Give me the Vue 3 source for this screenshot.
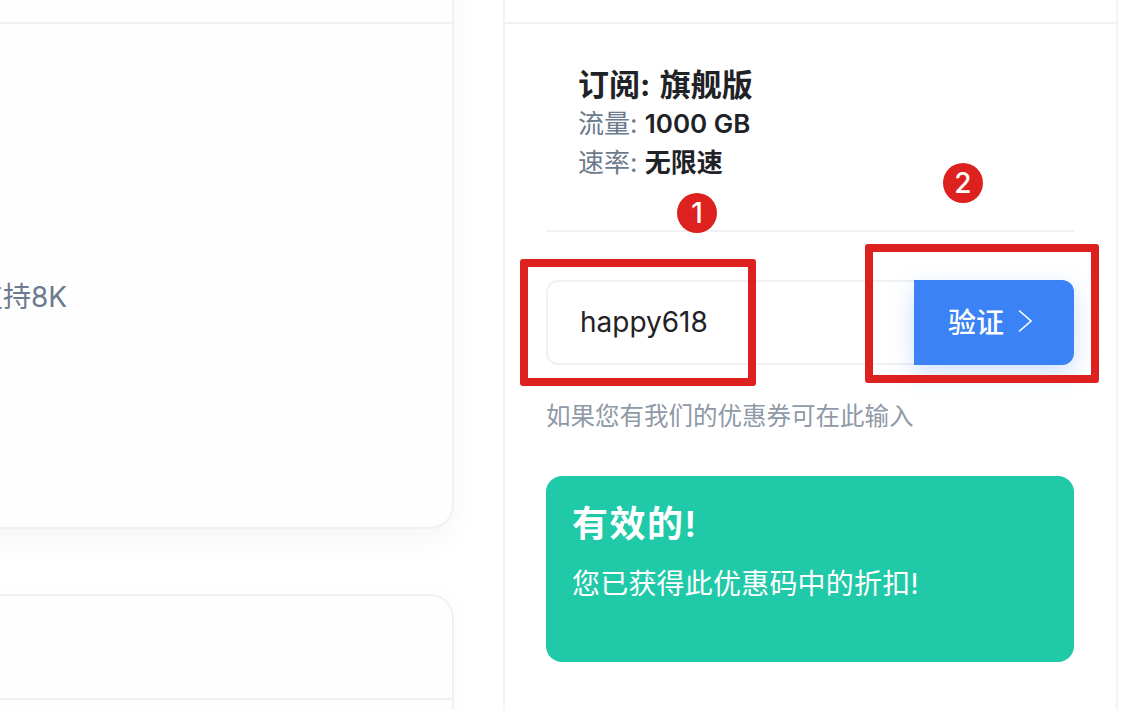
<script setup>
const plan = [
  { label: '流量:', value: '1000 GB' },
  { label: '速率:', value: '无限速' },
]
</script>

<template>
  <div class="page">
    <div class="left">
      <section class="card first">
        <div class="card-head first-head"></div>
        <div class="first-body"><p class="feature">支持8K</p></div>
      </section>
      <section class="card second">
        <div class="card-head second-head"></div>
        <div class="second-body"></div>
      </section>
    </div>
    <section class="right">
      <div class="right-head"></div>
      <div class="right-body">
        <div class="summary">
          <h3>订阅: 旗舰版</h3>
          <p v-for="row in plan" :key="row.label" class="row">
            <span class="label">{{ row.label }}</span> <b>{{ row.value }}</b>
          </p>
        </div>
        <div class="coupon">
          <input class="code" value="happy618" readonly />
          <button class="verify">
            验证
            <svg width="16" height="24" viewBox="0 0 16 24" fill="none" stroke="#fff" stroke-width="1.6">
              <path d="M2 1.5 14 12 2 22.5" />
            </svg>
          </button>
        </div>
        <p class="hint">如果您有我们的优惠券可在此输入</p>
        <div class="success">
          <h4>有效的!</h4>
          <p>您已获得此优惠码中的折扣!</p>
        </div>
      </div>
    </section>

    <div class="mark box-one"></div>
    <div class="mark box-two"></div>
    <span class="badge badge-one">1</span>
    <span class="badge badge-two">2</span>
  </div>
</template>

<style>
body { background: #fff; }
</style>

<style scoped>
.page {
  position: relative;
  width: 1128px;
  height: 710px;
  overflow: hidden;
  display: flex;
  gap: 49px;
  background: #fff;
  color: #1f2226;
  font-family: Inter, "Noto Sans CJK SC", sans-serif;
}
.left {
  flex: none;
  width: 654px;
  margin-left: -200px;
  margin-top: -60px;
  display: flex;
  flex-direction: column;
  gap: 65px;
}
.card {
  flex: none;
  background: #fefefe;
  border: 2px solid #f0f0f5;
  border-radius: 24px;
  box-shadow: 0 10px 24px rgba(90, 110, 110, 0.06);
}
.card-head { border-bottom: 2px solid #f0f0f5; }
.first-head { height: 80px; }
.first-body { height: 503px; box-sizing: border-box; padding: 254px 0 0 173px; }
.feature {
  margin: 0;
  font-size: 28px;
  line-height: 38px;
  color: #6b7a8d;
}
.second { box-shadow: 0 0 20px rgba(90, 90, 120, 0.03); }
.second-head { height: 102px; }
.second-body { height: 80px; }

.right {
  flex: none;
  width: 615px;
  height: 760px;
  box-sizing: border-box;
  border-left: 2px solid #f2f2f7;
  border-right: 2px solid #f2f2f7;
}
.right-head { height: 22px; border-bottom: 2px solid #f0f0f5; }
.right-body { padding: 42px 42px 0 41px; }
.summary {
  padding: 0 0 48px 32px;
  border-bottom: 2px solid #f0f0f5;
}
.summary h3 {
  margin: 0;
  font-size: 31px;
  line-height: 38px;
  font-weight: 700;
  word-spacing: 2px;
}
.row {
  margin: 0;
  font-size: 26px;
  line-height: 39px;
}
.row b { font-weight: 600; }
.label { color: #6b7a8d; }
.coupon {
  display: flex;
  margin-top: 48px;
  height: 85px;
}
.code {
  flex: 1;
  min-width: 0;
  box-sizing: border-box;
  padding: 0 32px 2px;
  border: 2px solid #f0f0f5;
  border-right: 0;
  border-radius: 12px 0 0 12px;
  outline: 0;
  background: #fff;
  color: #1f2226;
  font: 400 28px Inter, "Noto Sans CJK SC", sans-serif;
}
.verify {
  flex: none;
  width: 160px;
  display: flex;
  align-items: center;
  justify-content: center;
  gap: 13px;
  border: 0;
  padding: 0 7px 3px 0;
  border-radius: 0 12px 12px 0;
  background: #3b82f6;
  color: #fff;
  font: 500 28px Inter, "Noto Sans CJK SC", sans-serif;
  box-shadow: 0 8px 24px rgba(59, 130, 246, 0.25);
}
.hint {
  margin: 33px 0 0;
  font-size: 24.5px;
  line-height: 36px;
  color: #8f99a8;
}
.success {
  height: 186px;
  box-sizing: border-box;
  margin-top: 42px;
  padding: 26px 26px;
  border-radius: 16px;
  background: #20c9a7;
  color: #fff;
}
.success h4 {
  margin: 0;
  font-size: 36px;
  line-height: 44px;
  font-weight: 600;
  letter-spacing: 1.5px;
}
.success p {
  margin: 20px 0 0;
  font-size: 28px;
  line-height: 36px;
  letter-spacing: 0.2px;
}

.mark {
  position: absolute;
  box-sizing: border-box;
  border: 8px solid #dc211e;
  border-radius: 3px;
}
.box-one { left: 520px; top: 259px; width: 236px; height: 127px; }
.box-two { left: 865px; top: 244px; width: 234px; height: 139px; }
.badge {
  position: absolute;
  width: 40px;
  height: 40px;
  border-radius: 50%;
  background: #dc211e;
  color: #fff;
  font-size: 28px;
  font-weight: 500;
  line-height: 40px;
  text-align: center;
}
.badge-one { left: 677px; top: 193px; }
.badge-two { left: 943px; top: 163px; }
</style>
